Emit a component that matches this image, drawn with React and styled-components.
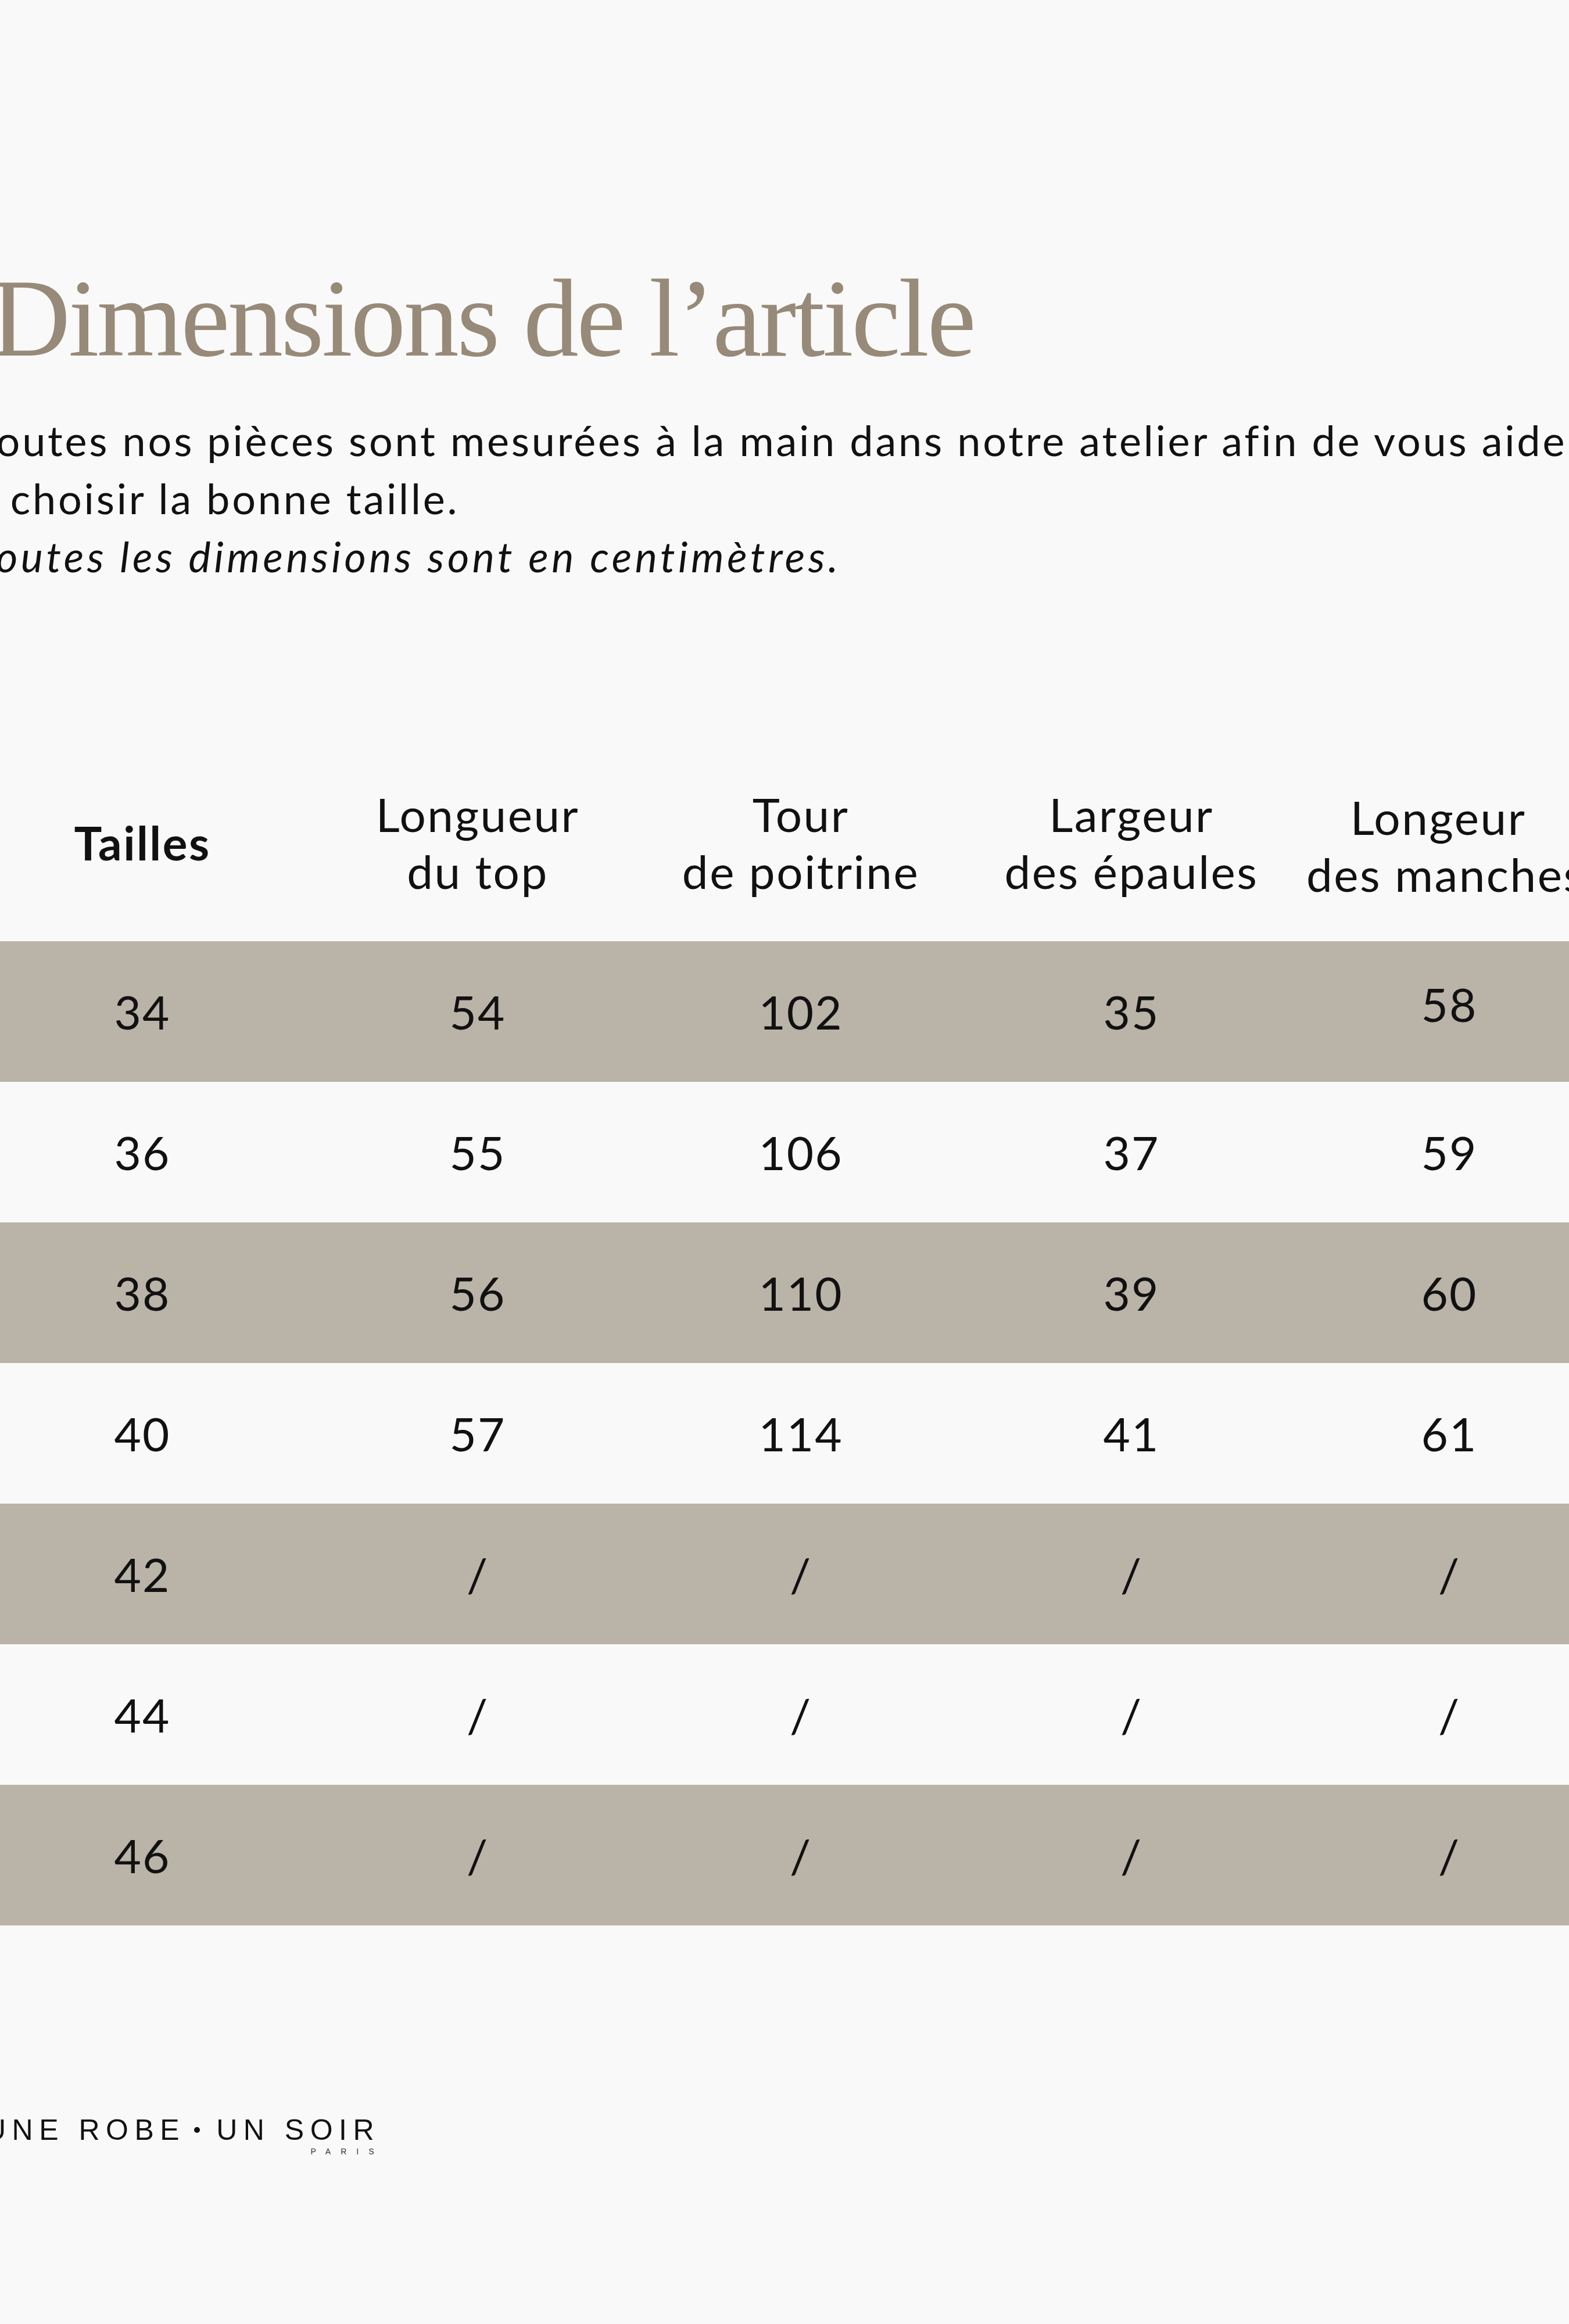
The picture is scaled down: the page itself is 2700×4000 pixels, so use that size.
import styled, { createGlobalStyle } from "styled-components";

const GlobalStyle = createGlobalStyle`
  html, body {
    margin: 0;
    padding: 0;
    background: #f9f9f9;
  }
  body {
    width: 2700px;
    min-height: 4000px;
    overflow: hidden;
  }
`;

const Page = styled.div`
  width: 2812px;
  margin-left: -44px;
  padding-top: 453px;
  display: flex;
  flex-direction: column;
`;

const Title = styled.h1`
  margin: 0;
  padding-left: 28px;
  font-family: "Liberation Serif", "Times New Roman", serif;
  font-weight: 400;
  font-size: 190px;
  line-height: 190px;
  letter-spacing: -3.5px;
  color: #978a78;
`;

const Intro = styled.p`
  margin: 64px 0 0;
  font-family: Lato, "Liberation Sans", sans-serif;
  font-size: 72px;
  line-height: 100px;
  letter-spacing: 3.8px;
  color: #111111;
  white-space: nowrap;
`;

const Note = styled.em`
  font-style: italic;
  letter-spacing: 5.5px;
`;

const Table = styled.div`
  margin-top: 273px;
  display: flex;
  flex-direction: column;
`;

const Row = styled.div`
  display: grid;
  grid-template-columns: 578px 576px 536px 602px 492px;
  align-items: center;
  height: ${(p) => (p.$head ? 340 : 242)}px;
  background: ${(p) => (p.$shaded ? "#bab3a8" : "transparent")};
`;

const HeadCell = styled.div`
  text-align: center;
  white-space: nowrap;
  font-family: Lato, "Liberation Sans", sans-serif;
  font-size: 80px;
  line-height: 98px;
  letter-spacing: 2.5px;
  font-weight: ${(p) => (p.$bold ? 700 : 400)};
  color: #111111;
  margin-top: ${(p) => p.$drop || 0}px;
  margin-right: ${(p) => p.$shift || 0}px;
`;

const Cell = styled.div`
  text-align: center;
  font-family: Lato, "Liberation Sans", sans-serif;
  font-size: 80px;
  line-height: 98px;
  letter-spacing: 2px;
  color: #111111;
  padding-bottom: ${(p) => (p.$raise ? 26 : 0)}px;
`;

const Logo = styled.div`
  align-self: flex-start;
  margin-top: 327px;
  margin-left: 18px;
  display: flex;
  flex-direction: column;
  align-items: flex-end;
  color: #111111;
`;

const LogoMain = styled.div`
  display: flex;
  align-items: center;
  font-family: "Liberation Sans", Arial, sans-serif;
  font-size: 50px;
  line-height: 50px;
  letter-spacing: 10.5px;
  margin-right: -10.5px;
`;

const LogoDot = styled.span`
  width: 10px;
  height: 10px;
  border-radius: 50%;
  background: #111111;
  margin: 0 28px 0 15px;
`;

const LogoSub = styled.div`
  margin-top: 5px;
  font-family: "Liberation Sans", Arial, sans-serif;
  font-size: 14px;
  line-height: 14px;
  letter-spacing: 17px;
  margin-right: -17px;
  color: #333333;
`;

const headers = [
  { label: ["Tailles"], bold: true },
  { label: ["Longueur", "du top"] },
  { label: ["Tour", "de poitrine"] },
  { label: ["Largeur", "des épaules"] },
  { label: ["Longeur", "des manches"], drop: 10, shift: 38 },
];

const rows = [
  ["34", "54", "102", "35", "58"],
  ["36", "55", "106", "37", "59"],
  ["38", "56", "110", "39", "60"],
  ["40", "57", "114", "41", "61"],
  ["42", "/", "/", "/", "/"],
  ["44", "/", "/", "/", "/"],
  ["46", "/", "/", "/", "/"],
];

const App = () => {
  return (
    <>
      <GlobalStyle />
      <Page>
        <Title>Dimensions de l’article</Title>
        <Intro>
          Toutes nos pièces sont mesurées à la main dans notre atelier afin de vous aider
          <br />à choisir la bonne taille.
          <br />
          <Note>Toutes les dimensions sont en centimètres.</Note>
        </Intro>
        <Table>
          <Row $head>
            {headers.map((h, i) => (
              <HeadCell key={i} $bold={h.bold} $drop={h.drop} $shift={h.shift}>
                {h.label.map((line, j) => (
                  <div key={j}>{line}</div>
                ))}
              </HeadCell>
            ))}
          </Row>
          {rows.map((r, i) => (
            <Row key={i} $shaded={i % 2 === 0}>
              {r.map((v, j) => (
                <Cell key={j} $raise={i === 0 && j === 4}>
                  {v}
                </Cell>
              ))}
            </Row>
          ))}
        </Table>
        <Logo>
          <LogoMain>
            <span>UNE ROBE</span>
            <LogoDot />
            <span>UN SOIR</span>
          </LogoMain>
          <LogoSub>PARIS</LogoSub>
        </Logo>
      </Page>
    </>
  );
};

export default App;
